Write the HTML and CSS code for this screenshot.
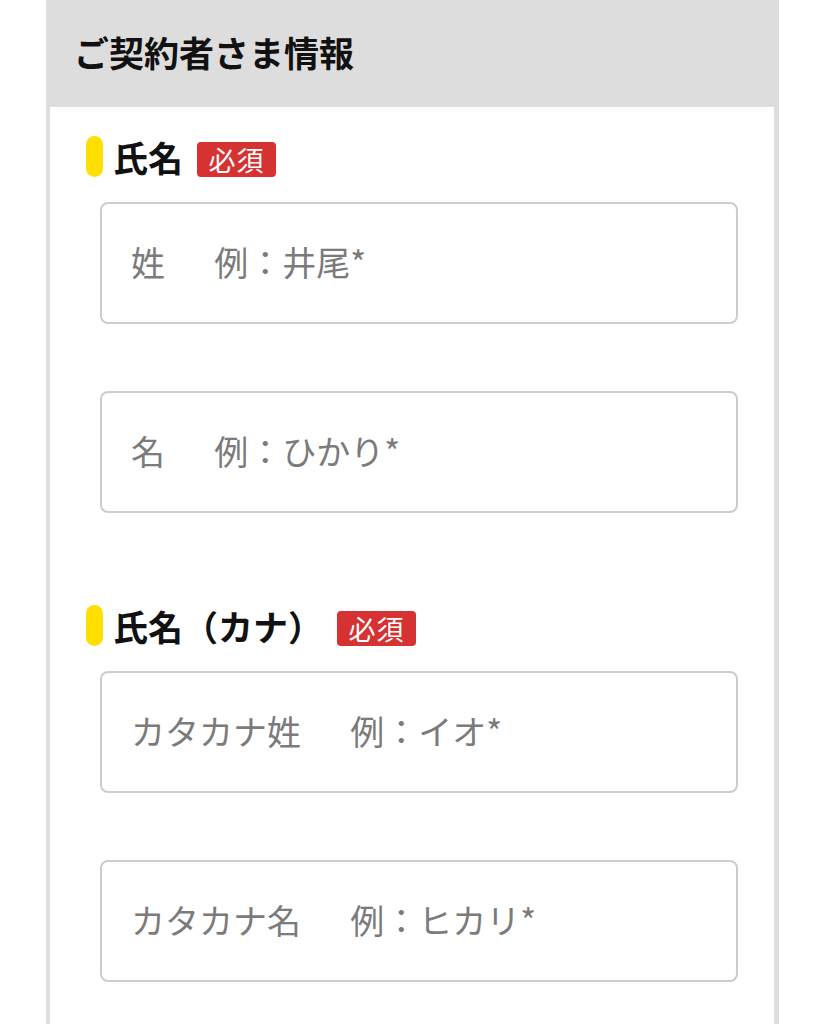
FILE: index.html
```html
<!DOCTYPE html>
<html lang="ja">
<head>
<meta charset="utf-8">
<title>ご契約者さま情報</title>
<link rel="stylesheet" href="styles.css">
</head>
<body>
<section class="panel">
  <h2 class="panel-head">ご契約者さま情報</h2>
  <div class="panel-body">
    <div class="field-group">
      <div class="field-label">
        <span class="marker"></span>
        <span class="label-text">氏名</span>
        <span class="badge">必須</span>
      </div>
      <div class="inputs">
        <input class="text-input" type="text" placeholder="姓　  例：井尾*">
        <input class="text-input" type="text" placeholder="名　  例：ひかり*">
      </div>
    </div>
    <div class="field-group">
      <div class="field-label">
        <span class="marker"></span>
        <span class="label-text">氏名（カナ）</span>
        <span class="badge">必須</span>
      </div>
      <div class="inputs">
        <input class="text-input" type="text" placeholder="カタカナ姓　  例：イオ*">
        <input class="text-input" type="text" placeholder="カタカナ名　  例：ヒカリ*">
      </div>
    </div>
  </div>
</section>
</body>
</html>
```
FILE: styles.css
```css
* { box-sizing: border-box; }
html, body {
  margin: 0;
  padding: 0;
  background: #ffffff;
  font-family: "Noto Sans CJK JP", "Noto Sans", sans-serif;
}
.panel {
  margin-left: 46px;
  width: 733px;
  min-height: 1100px;
  display: flex;
  flex-direction: column;
}
.panel-head {
  margin: 0;
  height: 107px;
  background: #dddddd;
  display: flex;
  align-items: center;
  padding-left: 28px;
  padding-bottom: 4px;
  font-size: 35px;
  font-weight: 700;
  color: #111111;
  letter-spacing: 0;
}
.panel-body {
  flex: 1;
  border-left: 4px solid #dddddd;
  border-right: 5px solid #dddddd;
  padding: 29px 36px 0 36px;
  display: flex;
  flex-direction: column;
  gap: 92px;
}
.field-label {
  display: flex;
  align-items: center;
  height: 41px;
}
.marker {
  width: 17px;
  height: 41px;
  border-radius: 9px;
  background: #ffdf00;
  flex: none;
}
.label-text {
  margin-left: 10px;
  font-size: 35px;
  font-weight: 700;
  color: #111111;
  line-height: 1;
}
.badge {
  margin-left: 14px;
  width: 79px;
  height: 35px;
  margin-top: 6px;
  border-radius: 4px;
  background: #d63232;
  color: #ffffff;
  font-size: 27px;
  line-height: 35px;
  text-align: center;
  letter-spacing: 1px;
}
.inputs {
  margin-top: 25px;
  margin-left: 14px;
  display: flex;
  flex-direction: column;
  gap: 67px;
}
.text-input {
  width: 638px;
  height: 122px;
  border: 2px solid #cccccc;
  border-radius: 8px;
  padding: 0 0 3px 29px;
  font-family: "Noto Sans CJK JP", "Noto Sans", sans-serif;
  font-size: 34px;
  color: #333333;
  background: #ffffff;
  outline: none;
}
.text-input::placeholder {
  color: #7b7b7b;
  opacity: 1;
  white-space: pre;
}
```
